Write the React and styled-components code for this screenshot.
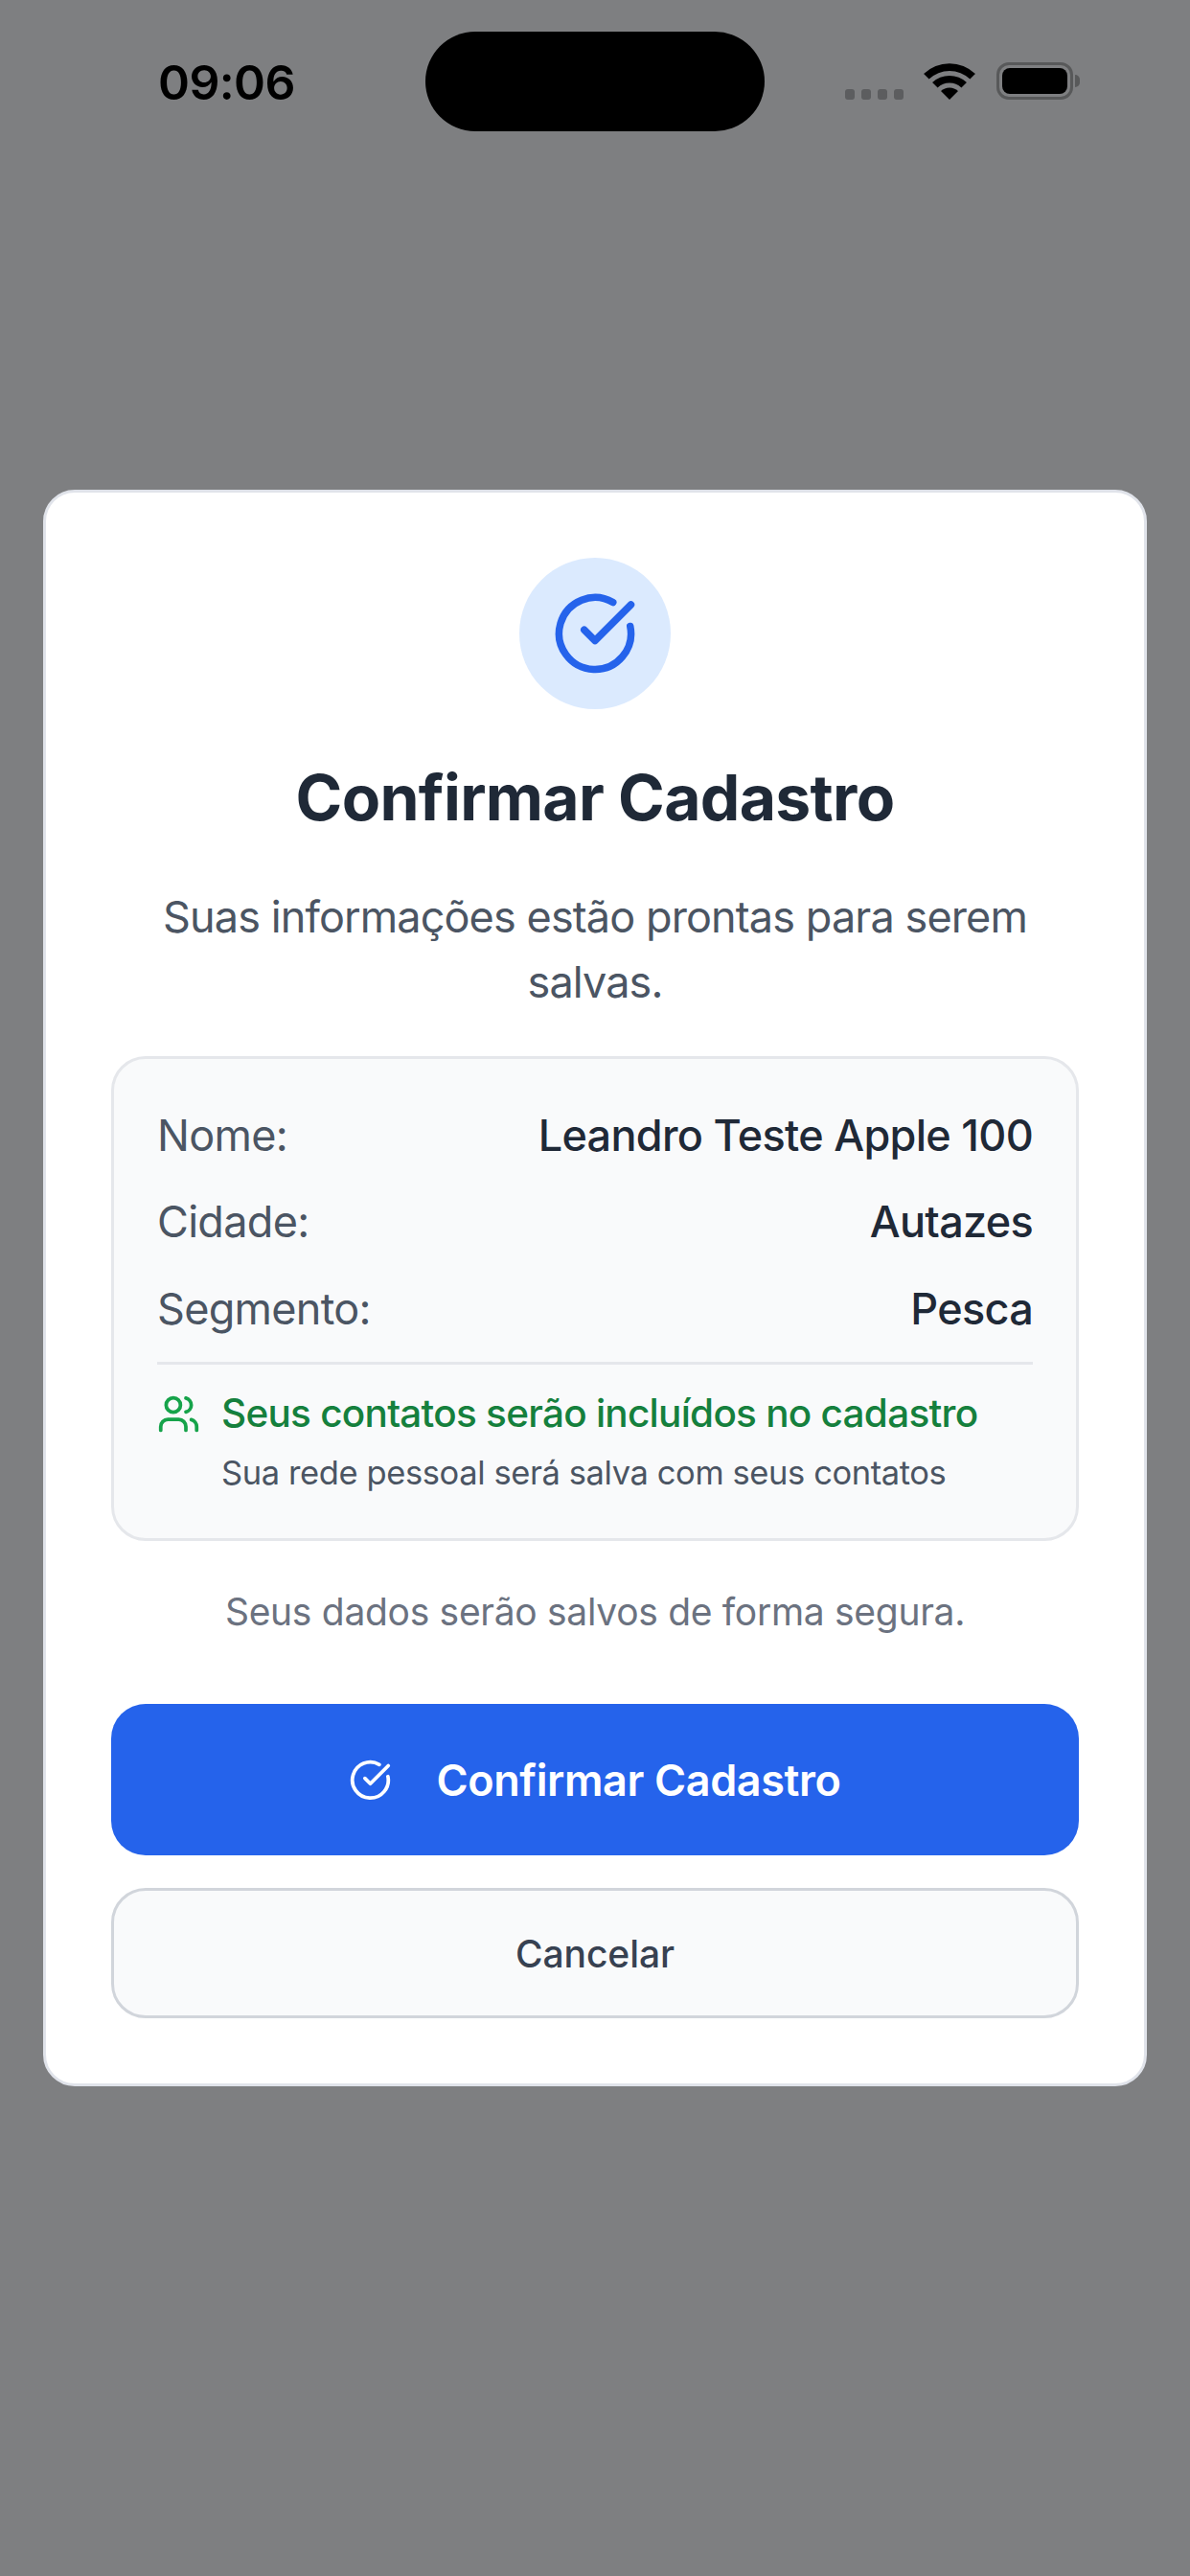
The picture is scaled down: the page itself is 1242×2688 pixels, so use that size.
import React from "react";
import styled, { createGlobalStyle } from "styled-components";
import { CircleCheckBig, Users } from "lucide-react";

const Global = createGlobalStyle`
  html, body { margin: 0; padding: 0; }
  body { font-family: Inter, "Noto Sans", sans-serif; background: #7e7f81; }
  * { box-sizing: border-box; }
`;

const Overlay = styled.div`
  position: relative;
  width: 1242px;
  height: 2688px;
  background: #7e7f81;
  display: flex;
  align-items: center;
  justify-content: center;
  padding: 0 45px;
`;

const StatusBar = styled.div`
  position: absolute;
  top: 0;
  left: 0;
  right: 0;
  height: 170px;
`;

const Time = styled.span`
  position: absolute;
  left: 165px;
  top: 55px;
  font-size: 50px;
  line-height: 63px;
  letter-spacing: -0.6px;
  font-weight: 600;
  color: #000;
`;

const Island = styled.div`
  position: absolute;
  left: 444px;
  top: 33px;
  width: 354px;
  height: 104px;
  border-radius: 52px;
  background: #000;
`;

const Dots = styled.div`
  position: absolute;
  left: 882px;
  top: 93px;
  display: flex;
  gap: 7px;
`;

const Dot = styled.i`
  display: block;
  width: 10px;
  height: 11px;
  border-radius: 3px;
  background: #5c5d5f;
`;

const WifiIcon = styled.svg`
  position: absolute;
  left: 964px;
  top: 65px;
`;

const Battery = styled.div`
  position: absolute;
  left: 1040px;
  top: 65px;
  width: 80px;
  height: 39px;
  border: 3px solid #58595a;
  border-radius: 13px;
  padding: 3px;
  &::after {
    content: "";
    position: absolute;
    left: 79px;
    top: 10px;
    width: 5px;
    height: 13px;
    background: #58595a;
    border-radius: 0 5px 5px 0;
  }
`;

const BatteryFill = styled.div`
  width: 100%;
  height: 100%;
  background: #000;
  border-radius: 8px;
`;

const Card = styled.div`
  width: 1152px;
  background: #fff;
  border: 3px solid #e0e3ea;
  border-radius: 33px;
  padding: 68px 68px 68px;
  display: flex;
  flex-direction: column;
  align-items: center;
`;

const IconCircle = styled.div`
  width: 158px;
  height: 158px;
  border-radius: 50%;
  background: #dbeafe;
  color: #2563eb;
  display: flex;
  align-items: center;
  justify-content: center;
`;

const Title = styled.h2`
  margin: 52px 0 0;
  font-size: 66px;
  line-height: 80px;
  letter-spacing: -0.7px;
  font-weight: 700;
  color: #1f2937;
  text-align: center;
`;

const Subtitle = styled.p`
  margin: 51px 0 0;
  width: 100%;
  font-size: 45px;
  line-height: 68px;
  letter-spacing: -0.89px;
  color: #4b5563;
  text-align: center;
`;

const InfoBox = styled.div`
  width: 100%;
  margin-top: 43px;
  background: #f9fafb;
  border: 3px solid #e5e7eb;
  border-radius: 36px;
  padding: 0 45px 41px;
`;

const Rows = styled.div`
  padding-top: 34px;
  display: flex;
  flex-direction: column;
`;

const Row = styled.div`
  display: flex;
  justify-content: space-between;
  align-items: center;
  height: 90.5px;
  font-size: 45px;
  letter-spacing: -0.7px;
`;

const Label = styled.span`
  color: #4b5563;
`;

const Value = styled.span`
  color: #1f2937;
  font-weight: 500;
`;

const ContactsNote = styled.div`
  margin-top: 11px;
  border-top: 3px solid #e5e7eb;
  padding-top: 24px;
  display: flex;
  gap: 22px;
`;

const NoteIcon = styled.div`
  color: #16a34a;
  height: 48px;
  margin-top: 5px;
  flex: none;
`;

const NoteText = styled.div`
  display: flex;
  flex-direction: column;
`;

const NoteTitle = styled.span`
  font-size: 40.5px;
  line-height: 54px;
  letter-spacing: -0.75px;
  font-weight: 500;
  color: #15803d;
`;

const NoteSub = styled.span`
  margin-top: 8px;
  font-size: 34.5px;
  line-height: 54px;
  letter-spacing: -0.4px;
  color: #4b5563;
`;

const Footnote = styled.p`
  margin: 44px 0 0;
  font-size: 39px;
  line-height: 60px;
  letter-spacing: -0.3px;
  color: #6b7280;
  text-align: center;
`;

const PrimaryButton = styled.button`
  margin-top: 66px;
  width: 100%;
  height: 158px;
  border: 0;
  border-radius: 36px;
  background: #2563eb;
  color: #fff;
  font: 600 45px Inter, sans-serif;
  letter-spacing: -0.4px;
  display: flex;
  align-items: center;
  justify-content: center;
  gap: 46px;
`;

const SecondaryButton = styled.button`
  margin-top: 34px;
  width: 100%;
  height: 136px;
  border: 3px solid #d1d5db;
  border-radius: 36px;
  background: #f9fafb;
  color: #374151;
  font: 500 39px Inter, sans-serif;
  letter-spacing: -0.1px;
`;

const band = (r1, r2, s = 0.69, cx = 27, cy = 39) => {
  const p = (r, sign) => `${cx + sign * r * s} ${cy - r * s}`;
  return r1 === 0
    ? `M${p(r2, -1)}A${r2} ${r2} 0 0 1 ${p(r2, 1)}L${cx} ${cy}Z`
    : `M${p(r2, -1)}A${r2} ${r2} 0 0 1 ${p(r2, 1)}L${p(r1, 1)}A${r1} ${r1} 0 0 0 ${p(r1, -1)}Z`;
};

const details = [
  ["Nome:", "Leandro Teste Apple 100"],
  ["Cidade:", "Autazes"],
  ["Segmento:", "Pesca"],
];

export default function App() {
  return (
    <>
      <Global />
      <Overlay>
        <StatusBar>
          <Time>09:06</Time>
          <Island />
          <Dots>
            <Dot />
            <Dot />
            <Dot />
            <Dot />
          </Dots>
          <WifiIcon width="54" height="39" viewBox="0 0 54 39">
            <path d={band(31, 39)} fill="#000" />
            <path d={band(18, 26)} fill="#000" />
            <path d={band(0, 13)} fill="#000" />
          </WifiIcon>
          <Battery>
            <BatteryFill />
          </Battery>
        </StatusBar>
        <Card>
          <IconCircle>
            <CircleCheckBig size={90} strokeWidth={2} />
          </IconCircle>
          <Title>Confirmar Cadastro</Title>
          <Subtitle>Suas informações estão prontas para serem salvas.</Subtitle>
          <InfoBox>
            <Rows>
              {details.map(([label, value]) => (
                <Row key={label}>
                  <Label>{label}</Label>
                  <Value>{value}</Value>
                </Row>
              ))}
            </Rows>
            <ContactsNote>
              <NoteIcon>
                <Users size={45} strokeWidth={2} />
              </NoteIcon>
              <NoteText>
                <NoteTitle>Seus contatos serão incluídos no cadastro</NoteTitle>
                <NoteSub>Sua rede pessoal será salva com seus contatos</NoteSub>
              </NoteText>
            </ContactsNote>
          </InfoBox>
          <Footnote>Seus dados serão salvos de forma segura.</Footnote>
          <PrimaryButton>
            <CircleCheckBig size={45} strokeWidth={2} />
            Confirmar Cadastro
          </PrimaryButton>
          <SecondaryButton>Cancelar</SecondaryButton>
        </Card>
      </Overlay>
    </>
  );
}
